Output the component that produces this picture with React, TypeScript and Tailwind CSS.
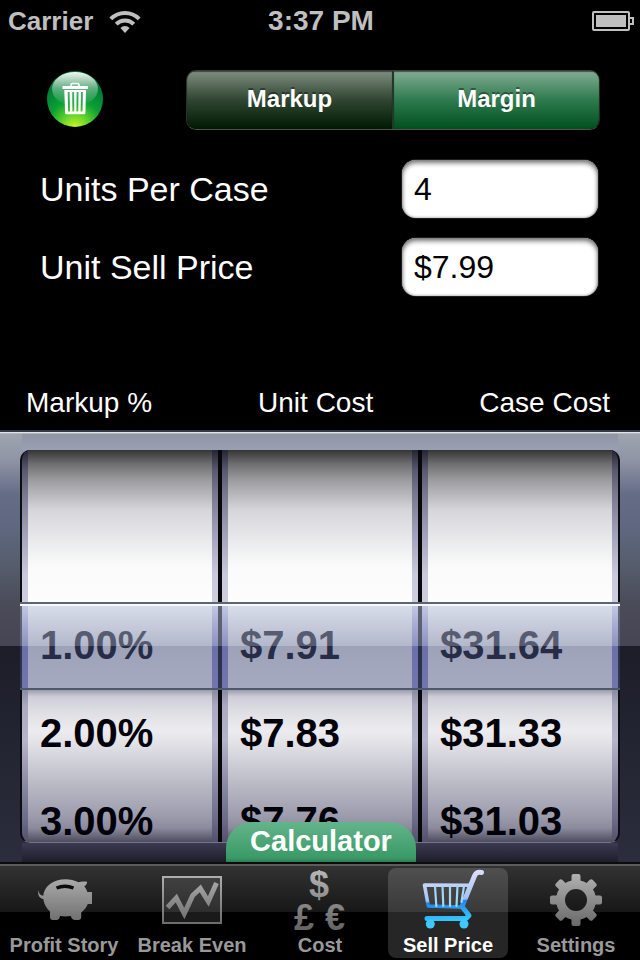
import { useState, type ReactNode } from "react";

const columns = [
    { label: "Markup %", values: ["1.00%", "2.00%", "3.00%"] },
    { label: "Unit Cost", values: ["$7.91", "$7.83", "$7.76"] },
    { label: "Case Cost", values: ["$31.64", "$31.33", "$31.03"] },
];

function WifiIcon() {
    return (
        <svg width="32" height="24" viewBox="0 0 32 24" fill="none" stroke="#bfbfbf" strokeWidth="4">
            <path d="M1.8 9.9a19.8 19.8 0 0 1 28.4 0" />
            <path d="M7.2 15.2a12.4 12.4 0 0 1 17.6 0" />
            <path d="M16 24l-4.600-5a6.400 6.400 0 0 1 9.200 0z" fill="#bfbfbf" stroke="none" />
        </svg>
    );
}

function BatteryIcon() {
    return (
        <svg width="42" height="20" viewBox="0 0 42 20" fill="none" stroke="#bfbfbf" strokeWidth="2">
            <rect x="1" y="1" width="36" height="18" rx="1" />
            <path d="M38 7h3v6h-3" />
            <rect x="4" y="4" width="30" height="12" fill="#bfbfbf" stroke="none" />
        </svg>
    );
}

function TrashBallIcon() {
    return (
        <svg width="56" height="56" viewBox="0 0 56 56">
            <defs>
                <radialGradient id="ball" cx="28" cy="58" r="48" gradientUnits="userSpaceOnUse">
                    <stop offset="0" stopColor="#e4ff10" />
                    <stop offset="0.12" stopColor="#a8ec28" />
                    <stop offset="0.35" stopColor="#52cc2c" />
                    <stop offset="0.6" stopColor="#0a9e36" />
                    <stop offset="1" stopColor="#007a35" />
                </radialGradient>
                <linearGradient id="gloss" x1="0" y1="0" x2="0" y2="1">
                    <stop offset="0" stopColor="#fff" stopOpacity="0.95" />
                    <stop offset="0.5" stopColor="#fff" stopOpacity="0.35" />
                    <stop offset="1" stopColor="#fff" stopOpacity="0" />
                </linearGradient>
            </defs>
            <circle cx="28" cy="28" r="28" fill="url(#ball)" />
            <ellipse cx="28" cy="18" rx="23" ry="17" fill="url(#gloss)" />
            <path d="M24 15.5v-1.500a1.500 1.500 0 0 1 1.500-1.500h5a1.500 1.500 0 0 1 1.500 1.500v1.500" fill="none" stroke="#fff" strokeWidth="1.6" />
            <rect x="15.5" y="15" width="25.5" height="3" rx="0.5" fill="#fff" />
            <path
                fill="#fff"
                fillRule="evenodd"
                d="M17.3 19H39l-.6 23a1.2 1.2 0 0 1-1.2 1.2H19.3A1.2 1.2 0 0 1 18.1 42zM20.700 21l.4 19.500h1.900L22.600 21zM25.200 21l.2 19.500h1.900L27.100 21zM29.600 21l-.2 19.500h1.900l.2-19.500zM34 21l-.4 19.500h1.900l.4-19.500z"
            />
        </svg>
    );
}

function GreyGradient({ id }: { id: string }) {
    return (
        <linearGradient id={id} x1="0" y1="4" x2="0" y2="60" gradientUnits="userSpaceOnUse">
            <stop offset="0" stopColor="#b4b4b4" />
            <stop offset="1" stopColor="#666" />
        </linearGradient>
    );
}

function PiggyIcon() {
    return (
        <svg width="64" height="64" viewBox="0 0 64 64">
            <defs>
                <GreyGradient id="pig" />
            </defs>
            <path
                fill="url(#pig)"
                d="M6.3 22C7 26 8.500 27.300 11.300 27.800C12 20 18 14.500 25 12.500C32 10.600 40 11 46.500 14.300C49 13.200 52 13.300 55.200 13.800C55 16 53.800 17.300 52.300 18.600C53.800 20.400 54.800 22 55.300 24H60V36H55.800C54.500 39.500 52 42.300 49.200 44.500V49C49.200 51 48 52 46.500 52H43C41 52 39.500 50.500 38.700 48C35 48.600 31 48.600 28 48C27.500 50.500 26.500 52 24.500 52H20.800C19 52 18 51 18 49V43.500C14.500 40.500 12 36 11.300 31C7.500 30.500 5.500 27 6.300 22z"
            />
            <path d="M24.500 20Q33 16.500 41.500 20" fill="none" stroke="#0c0c0c" strokeWidth="3.5" />
        </svg>
    );
}

function ChartIcon() {
    return (
        <svg width="64" height="64" viewBox="0 0 64 64" fill="none">
            <defs>
                <GreyGradient id="chart" />
            </defs>
            <rect x="3" y="9" width="58" height="46" fill="#fff" fillOpacity="0.1" stroke="url(#chart)" strokeWidth="2" />
            <path
                d="M7.500 39.500L16.300 30L24.300 45.500L32.700 27.500L40.300 20.500L48.300 33.500L56.500 15"
                stroke="url(#chart)"
                strokeWidth="5"
            />
        </svg>
    );
}

function CurrencyIcon() {
    return (
        <svg
            width="64"
            height="64"
            viewBox="0 0 64 64"
            fill="url(#money)"
            textAnchor="middle"
            className="overflow-visible text-[36px]"
        >
            <defs>
                <GreyGradient id="money" />
            </defs>
            <text x="31" y="29" fontWeight="700">$</text>
            <text x="16" y="62">£</text>
            <text x="47" y="62">€</text>
        </svg>
    );
}

function CartIcon() {
    return (
        <svg
            width="64"
            height="64"
            viewBox="0 0 64 64"
            fill="none"
            stroke="url(#cart)"
            strokeLinecap="round"
            strokeLinejoin="round"
            className="overflow-visible"
        >
            <defs>
                <linearGradient id="cart" x1="0" y1="2" x2="4" y2="62" gradientUnits="userSpaceOnUse">
                    <stop offset="0" stopColor="#e4e4fb" />
                    <stop offset="0.5" stopColor="#a9c4f4" />
                    <stop offset="0.54" stopColor="#8fb8f4" />
                    <stop offset="0.56" stopColor="#1f86f2" />
                    <stop offset="1" stopColor="#3fe0ff" />
                </linearGradient>
            </defs>
            <path d="M65.500 4.500C61.500 3.800 60 4.500 58.500 8L46 38.500L53 47.500L50 50.500H11" strokeWidth="5" />
            <path d="M53 17.300L8.500 17L12.300 38L44.500 39" strokeWidth="3.6" />
            <path
                d="M19 18L20.300 38M26.500 18L27.300 38M34 18V38M41.500 18L40.500 38M48 18L45.500 34"
                stroke="#a4d6f6"
                strokeWidth="2.2"
            />
            <circle cx="14.3" cy="56" r="4.5" fill="#3fc8ff" stroke="none" />
            <circle cx="48" cy="56" r="4.5" fill="#3fc8ff" stroke="none" />
        </svg>
    );
}

function GearIcon() {
    return (
        <svg width="64" height="64" viewBox="0 0 64 64">
            <defs>
                <GreyGradient id="gear" />
                <mask id="gear-shape">
                    <circle cx="32" cy="32" r="20" fill="#fff" />
                    {[0, 45, 90, 135].map((angle) => (
                        <rect
                            key={angle}
                            x="27.5"
                            y="6"
                            width="9"
                            height="52"
                            rx="2"
                            fill="#fff"
                            transform={`rotate(${angle} 32 32)`}
                        />
                    ))}
                    <circle cx="32" cy="32" r="11" fill="#000" />
                </mask>
            </defs>
            <rect width="64" height="64" fill="url(#gear)" mask="url(#gear-shape)" />
        </svg>
    );
}

const tabs: { name: string; icon: ReactNode }[] = [
    { name: "Profit Story", icon: <PiggyIcon /> },
    { name: "Break Even", icon: <ChartIcon /> },
    { name: "Cost", icon: <CurrencyIcon /> },
    { name: "Sell Price", icon: <CartIcon /> },
    { name: "Settings", icon: <GearIcon /> },
];

function Field({ id, label, value, onChange }: {
    id: string;
    label: string;
    value: string;
    onChange: (value: string) => void;
}) {
    return (
        <div className="flex items-center justify-between">
            <label htmlFor={id} className="text-[34px] leading-10 text-white">{label}</label>
            <input
                id={id}
                value={value}
                onChange={(e) => onChange(e.target.value)}
                className="h-[58px] w-[196px] rounded-[14px] bg-white px-3 text-[32px] text-black shadow-[inset_0_3px_5px_#777,inset_0_0_3px_#999,0_0_0_1px_#1c1c1c] outline-none"
            />
        </div>
    );
}

function Wheel({ label, values }: { label: string; values: string[] }) {
    return (
        <div className="bg-[linear-gradient(#242434_0px,#5a586e_20px,#7a788f_44px,#a3a1ba_84px,#c9c8dc_125px,#cfcee0_152px,#d6d6f4_152px,#a9a9e6_185px,#9191db_200px,#9191db_240px,#8c8ba6_240px,#aaa9c0_256px,#b5b4ca_290px,#8a89a3_335px,#6c6b88_370px,#50506a_393px)] px-[6px]">
            <ul
                aria-label={label}
                className="h-full bg-[linear-gradient(#353537_0px,#6e6e70_14px,#9c9c9f_30px,#d6d6da_60px,#e6e6e9_85px,#f9faf9_115px,#fdfdfd_152px,#fff_240px,#9d9cac_240px,#cfced8_247px,#dedee4_262px,#ececf0_280px,#dedee4_297px,#b9b9c5_335px,#9d9dae_365px,#8b8b9d_378px,#48485a_393px)] pt-[152px]"
            >
                {values.map((value) => (
                    <li key={value} className="flex h-[88px] items-center pb-[2px] pl-3 text-[40px] font-bold text-[#000008]">
                        {value}
                    </li>
                ))}
            </ul>
        </div>
    );
}

export default function App() {
    const [mode, setMode] = useState("Margin");
    const [units, setUnits] = useState("4");
    const [price, setPrice] = useState("$7.99");
    const [activeTab, setActiveTab] = useState("Sell Price");

    function clearFields() {
        setUnits("");
        setPrice("");
    }

    return (
        <div className="flex min-h-screen flex-col bg-black font-['Liberation_Sans',Arial,sans-serif]">
            <header className="grid h-10 grid-cols-3 items-center pr-[6px] pb-[2px] pl-2 font-bold text-[#bfbfbf]">
                <div className="flex items-center gap-4 text-[26px]">
                    Carrier
                    <WifiIcon />
                </div>
                <div className="text-center text-[28px]">3:37 PM</div>
                <div className="flex justify-end">
                    <BatteryIcon />
                </div>
            </header>

            <main className="flex flex-1 flex-col">
                <div className="flex flex-col gap-5 pt-[30px] pr-[42px] pl-10">
                    <div className="-mr-[2px] mb-[10px] flex h-[60px] items-start justify-between pl-[7px]">
                        <button aria-label="Clear" onClick={clearFields} className="pt-px">
                            <TrashBallIcon />
                        </button>
                        <div className="flex h-[60px] w-[414px] overflow-hidden rounded-[10px] border border-t-[#3c3c3c] border-r-[#1c2c22] border-b-[#505050] border-l-[#2b302c]">
                            {["Markup", "Margin"].map((name) => (
                                <button
                                    key={name}
                                    aria-pressed={mode === name}
                                    onClick={() => setMode(name)}
                                    className={`flex-1 pb-[2px] text-[24px] font-bold text-white shadow-[inset_0_1px_1px_rgba(0,0,0,0.5)] [text-shadow:0_-2px_0_rgba(0,0,0,0.4)] ${
                                        mode === name
                                            ? "bg-[linear-gradient(#82ad93,#2e7a4f_50%,#00501f)]"
                                            : "border-r-2 border-[#24382a] bg-[linear-gradient(#7f8d80,#2f4531_50%,#001900)]"
                                    }`}
                                >
                                    {name}
                                </button>
                            ))}
                        </div>
                    </div>
                    <Field id="units" label="Units Per Case" value={units} onChange={setUnits} />
                    <Field id="price" label="Unit Sell Price" value={price} onChange={setPrice} />
                </div>

                <div className="mt-auto flex justify-between pt-10 pr-[30px] pb-[7px] pl-[26px] text-[28px] leading-10 text-white">
                    {columns.map((col) => (
                        <span key={col.label}>{col.label}</span>
                    ))}
                </div>

                {/* Picker */}
                <section className="relative border-t-2 border-[#323b44] bg-[linear-gradient(#a0a5b0_0px,#8f95a5_28px,#656c87_62px,#5f6880_95px,#555c6b_135px,#4b4c5a_170px,#454553_214px,#1c1d29_214px,#252734_340px,#2b2c3d_430px)] px-5 shadow-[inset_0_1px_0_#e2e3e5,inset_0_2px_0_#b3b7bd]">
                    <div className="mx-[2px] h-[18px] bg-[linear-gradient(transparent_2px,#8f95a5_2px,#9a9fb2)]" />
                    <div className="relative">
                        <div className="grid h-[393px] grid-cols-3 gap-1 overflow-hidden rounded-[10px] border-x-2 border-b border-x-[#0c0d10] border-b-[#74748a] bg-[#08080a]">
                            {columns.map((col) => (
                                <Wheel key={col.label} label={col.label} values={col.values} />
                            ))}
                        </div>
                        {/* Glass bar over the selected row */}
                        <div className="pointer-events-none absolute inset-x-0 top-[152px] h-[88px] border-y-2 border-t-[#5c6574] border-b-[#4c596a] bg-[linear-gradient(rgba(184,193,218,0.5),rgba(135,142,172,0.63)_50%,rgba(72,81,124,0.53)_50%,rgba(85,94,136,0.53))] shadow-[inset_0_2px_0_#f6f8fc]" />
                    </div>
                    <div className="mx-[2px] h-[19px] bg-[linear-gradient(#3a3a52,#1d1e2a)]" />
                    <button className="absolute bottom-0 left-1/2 -ml-[94px] h-10 w-[190px] rounded-t-[26px] bg-[linear-gradient(#64b48b,#3a9a66_90%,#2c7d50)] pb-[2px] text-[29px] leading-[38px] font-bold text-white">
                        Calculator
                    </button>
                </section>
            </main>

            <nav className="grid h-[98px] grid-cols-5 border-t-2 border-[#0c0c0c] bg-[linear-gradient(#5c5c5c_2px,#323232_2px,#171717_48px,#000_48px)] pt-1 pb-1">
                {tabs.map(({ name, icon }) => (
                    <button
                        key={name}
                        onClick={() => setActiveTab(name)}
                        className={`mx-1 flex flex-col items-center rounded-lg text-[20px] leading-[26px] font-bold whitespace-nowrap ${
                            activeTab === name ? "bg-white/15 text-white" : "text-[#999]"
                        }`}
                    >
                        {icon}
                        {name}
                    </button>
                ))}
            </nav>
        </div>
    );
}
